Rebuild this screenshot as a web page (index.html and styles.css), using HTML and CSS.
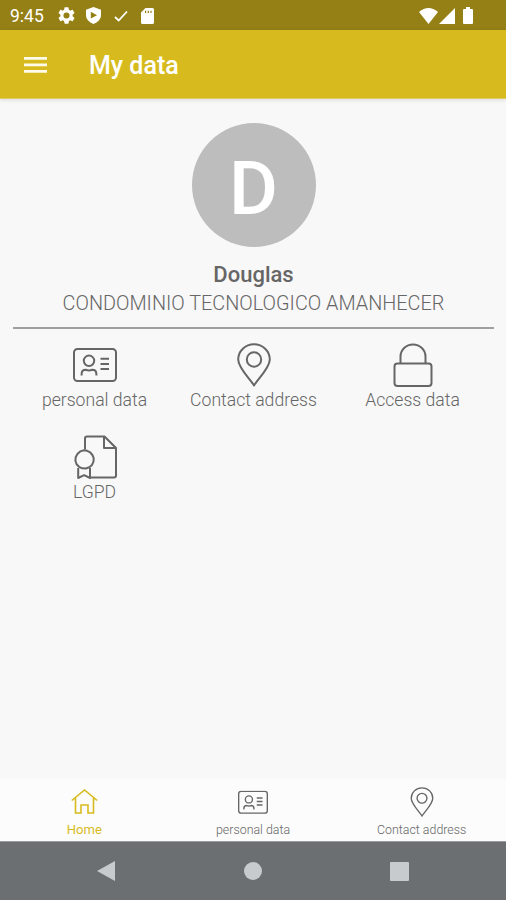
FILE: index.html
```html
<!DOCTYPE html>
<html lang="en">
<head>
  <meta charset="UTF-8">
  <meta name="viewport" content="width=device-width, initial-scale=1.0">
  <title>My data</title>
  <link rel="stylesheet" href="styles.css">
</head>
<body>

<!-- Shared icons -->
<svg class="icon-defs" width="0" height="0">
  <symbol id="icon-card" viewBox="0 0 44 34">
    <rect x="1" y="1" width="42" height="32" rx="3.5"/>
    <circle cx="16" cy="12.8" r="5.2"/>
    <path d="M8.6 27.5v-1.3q0-4.4 4.2-4.4q3.2 1.3 6.4 0q4.2 0 4.2 4.4v1.3M27.5 10.8H36M27.5 15.9H36M27.5 21H36"/>
  </symbol>
  <symbol id="icon-pin" viewBox="0 0 34 44">
    <path d="M17 42.5C13.5 36.5 1.2 25 1.2 16.5a15.8 15.3 0 0 1 31.6 0C32.8 25 20.5 36.5 17 42.5Z"/>
    <circle cx="17" cy="16.5" r="7.2"/>
  </symbol>
</svg>

<div class="statusbar">
  <span class="clock">9:45</span>
  <svg class="gear" width="17" height="17" viewBox="2 2 20 20"><path d="M19.14 12.94c.04-.3.06-.61.06-.94s-.02-.64-.07-.94l2.03-1.58a.5.5 0 0 0 .12-.61l-1.92-3.32a.5.5 0 0 0-.59-.22l-2.39.96a7 7 0 0 0-1.62-.94l-.36-2.54a.5.5 0 0 0-.48-.41h-3.84a.5.5 0 0 0-.47.41l-.36 2.54a7.4 7.4 0 0 0-1.62.94l-2.39-.96a.5.5 0 0 0-.59.22L2.74 8.87a.5.5 0 0 0 .12.61l2.03 1.58a6 6 0 0 0 0 1.88l-2.03 1.58a.5.5 0 0 0-.12.61l1.92 3.32c.12.22.37.29.59.22l2.39-.96c.5.38 1.03.7 1.62.94l.36 2.54c.05.24.24.41.48.41h3.84c.24 0 .44-.17.47-.41l.36-2.54a7 7 0 0 0 1.62-.94l2.39.96c.22.08.47 0 .59-.22l1.92-3.32a.5.5 0 0 0-.12-.61zM12 15.6a3.6 3.6 0 1 1 0-7.2 3.6 3.6 0 0 1 0 7.2z"/></svg>
  <svg class="shield" width="15" height="17" viewBox="0 0 15 17"><path fill-rule="evenodd" d="M7.5 0 15 2.8V8c0 4-3.2 7.600-7.500 9C3.200 15.600 0 12 0 8V2.800ZM4.800 4.800v6.800L11 8.200Z"/></svg>
  <svg class="check" width="14" height="12" viewBox="0 0 14 12"><path d="M1 7l3.700 3.500L13 1.500"/></svg>
  <svg class="sd" width="13" height="16" viewBox="0 0 13 16"><path fill-rule="evenodd" d="M4.500 0h7Q13 0 13 1.500v13q0 1.500-1.500 1.500h-10Q0 16 0 14.500v-10ZM4 2.800v2.200h1.200V2.800ZM6.700 2.800v2.200h1.200V2.800ZM9.400 2.800v2.200h1.200V2.800Z"/></svg>
  <svg class="wifi" width="19" height="16" viewBox="0 0 19 16"><path d="M0 4Q9.500-4 19 4L9.500 16Z"/></svg>
  <svg class="signal" width="16" height="16" viewBox="0 0 16 16"><path d="M16 0v16H0Z"/></svg>
  <svg class="battery" width="10" height="17" viewBox="0 0 10 17"><path d="M3 0h4v2h2q1 0 1 1v13q0 1-1 1H1q-1 0-1-1V3q0-1 1-1h2Z"/></svg>
</div>

<div class="toolbar">
  <svg class="menu" width="23" height="16" viewBox="0 0 23 16"><path d="M0 0h23v2.800H0ZM0 6.500h23v2.800H0ZM0 13h23v2.800H0Z"/></svg>
  <h1>My data</h1>
</div>

<div class="content">
  <div class="profile">
    <div class="avatar"><span>D</span></div>
    <div class="name">Douglas</div>
    <div class="condo">CONDOMINIO TECNOLOGICO AMANHECER</div>
  </div>

  <div class="options">
    <div class="option">
      <svg width="44" height="44" viewBox="0 0 44 44"><use href="#icon-card" y="5" width="44" height="34"/></svg>
      <span>personal data</span>
    </div>
    <div class="option">
      <svg width="34" height="44"><use href="#icon-pin" width="34" height="44"/></svg>
      <span>Contact address</span>
    </div>
    <div class="option">
      <svg width="40" height="44" viewBox="0 0 40 44">
        <rect x="1.500" y="20.500" width="37" height="22.500" rx="3"/>
        <path d="M7.500 20.500V13.500a12.500 12 0 0 1 25 0v7"/>
      </svg>
      <span>Access data</span>
    </div>
    <div class="option">
      <svg width="44" height="44" viewBox="0 0 44 44">
        <path d="M12 14.500V3.500q0-2 2-2h17.500L43 13v27.500q0 2-2 2H17M31 1.500V13h11.500"/>
        <path d="M11 15.200l3.200 .6 3 1.500 2.200 2.700 1.300 3.200-.2 3.500-1.500 3.200-2.700 2.400-3.500 1.200-3.500-.2-3.300-1.500-2.400-2.600-1.200-3.500.3-3.500 1.700-3.200 2.800-2.600Z"/>
        <path d="M5.200 33v10l5.900-2.800L17 43V33"/>
      </svg>
      <span>LGPD</span>
    </div>
  </div>
</div>

<div class="tabs">
  <div class="tab active">
    <svg width="27" height="26" viewBox="0 0 27 26"><path d="M.8 12.500 13.500 2l12.700 10.500M4.500 10v15h5.500v-8h7V25h5.500V10"/></svg>
    <span>Home</span>
  </div>
  <div class="tab">
    <svg width="30" height="30"><use href="#icon-card" y="3.500" width="30" height="23.500"/></svg>
    <span>personal data</span>
  </div>
  <div class="tab">
    <svg width="24" height="30"><use href="#icon-pin" width="24" height="30"/></svg>
    <span>Contact address</span>
  </div>
</div>

<div class="navbar">
  <svg width="18" height="20" viewBox="0 0 18 20"><path d="M18 0v20L0 10Z"/></svg>
  <svg width="18" height="18" viewBox="0 0 18 18"><circle cx="9" cy="9" r="9"/></svg>
  <svg width="19" height="19" viewBox="0 0 19 19"><rect width="19" height="19" rx="1"/></svg>
</div>

</body>
</html>
```

FILE: styles.css
```css
body {
  margin: 0;
  height: 900px;
  display: flex;
  flex-direction: column;
  overflow: hidden;
  font-family: Roboto, "Liberation Sans", sans-serif;
  color: #666;
  background-color: #f8f8f8;
}

svg {
  display: block;
  flex: none;
}

.icon-defs {
  position: absolute;
}

.statusbar {
  display: flex;
  align-items: center;
  box-sizing: border-box;
  height: 30px;
  padding: 1px 33px 0 10px;
  background-color: #958016;
  fill: #fff;
}

.clock {
  width: 48px;
  color: #fff;
  font-size: 17.5px;
}

.shield {
  margin-left: 11px;
}

.check {
  margin-left: 13px;
  fill: none;
  stroke: #fff;
  stroke-width: 1.8;
}

.sd {
  margin-left: 13px;
}

.wifi {
  margin-left: auto;
}

.signal {
  margin-left: 1px;
}

.battery {
  margin-left: 8px;
}

.toolbar {
  display: flex;
  align-items: center;
  box-sizing: border-box;
  height: 69px;
  padding: 2px 0 0 23.5px;
  background-color: #d7bb1e;
  border-bottom: 1px solid #dccb67;
  box-shadow: 0 1px 4px rgba(0, 0, 0, 0.12);
}

.menu {
  fill: #fffbe8;
}

.toolbar h1 {
  margin: 1px 0 0 42.5px;
  color: #fff;
  font-size: 25px;
  font-weight: 500;
}

.content {
  flex: 1;
  padding: 24px 12px 0 13px;
}

.profile {
  display: flex;
  flex-direction: column;
  align-items: center;
  height: 204px;
  border-bottom: 2px solid #a0a0a0;
}

.avatar {
  display: flex;
  align-items: center;
  justify-content: center;
  box-sizing: border-box;
  width: 124px;
  height: 124px;
  padding-top: 5px;
  border-radius: 50%;
  background-color: #bdbdbd;
  color: #fff;
  font-size: 75px;
  font-weight: 500;
}

.name {
  margin-top: 14px;
  font-size: 22px;
  line-height: 27px;
  font-weight: 500;
}

.condo {
  margin-top: 2px;
  font-size: 19.85px;
  line-height: 27px;
  font-weight: 300;
  white-space: nowrap;
}

.options {
  display: grid;
  grid-template-columns: repeat(3, 1fr);
  padding: 14px 2px 0;
}

.option {
  display: flex;
  flex-direction: column;
  align-items: center;
  height: 92px;
  font-size: 17.6px;
  line-height: 26px;
  font-weight: 300;
  white-space: nowrap;
}

.option svg {
  fill: none;
  stroke: #666;
  stroke-width: 2;
  stroke-linejoin: round;
}

.tabs {
  display: flex;
  height: 62px;
  background-color: #fcfcfc;
  box-shadow: 0 0 4px 1px #fafafa;
}

.tab {
  flex: 1;
  display: flex;
  flex-direction: column;
  align-items: center;
  justify-content: flex-end;
  padding-bottom: 3px;
  font-size: 12.4px;
  line-height: 16px;
  font-weight: 300;
}

.tab svg {
  margin-bottom: 5px;
  fill: none;
  stroke: #666;
  stroke-width: 2;
}

.tab.active {
  color: #d7bb1e;
  font-size: 13px;
  font-weight: 400;
}

.tab.active svg {
  margin-bottom: 8px;
  stroke: #d7bb1e;
  stroke-width: 1.6;
}

.navbar {
  display: flex;
  align-items: center;
  justify-content: space-between;
  box-sizing: border-box;
  height: 59px;
  padding: 0 97px;
  border-top: 1px solid #999c9e;
  background-color: #6b6f72;
  fill: #c7cbcd;
}
```
